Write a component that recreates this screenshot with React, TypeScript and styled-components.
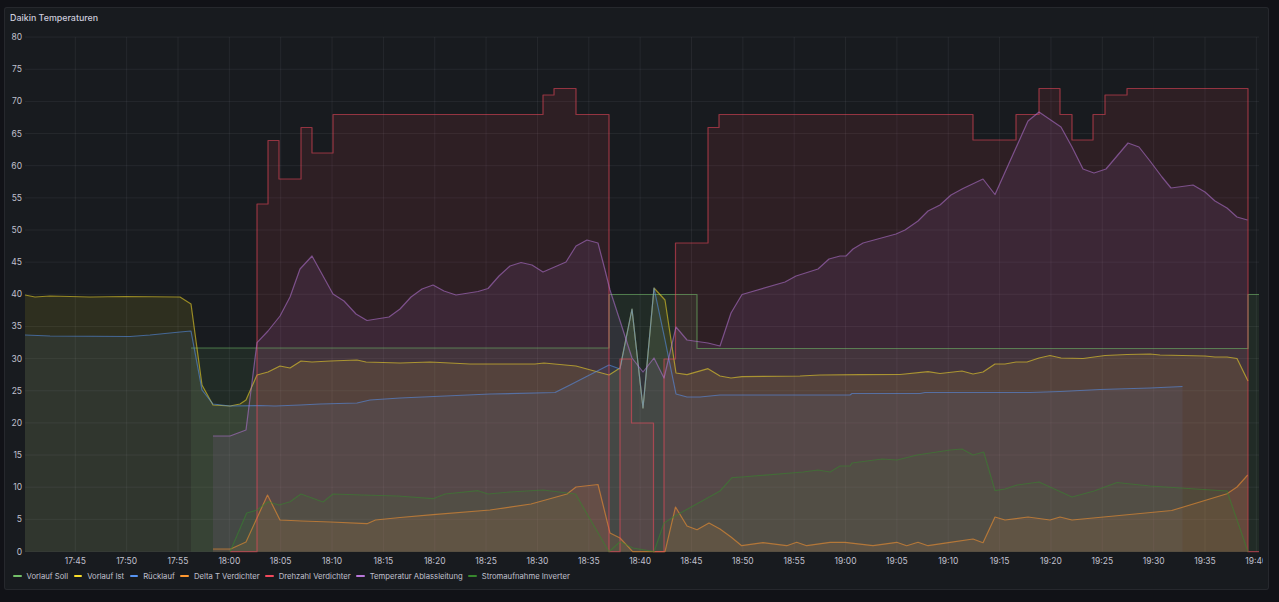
import React from 'react';
import styled, { createGlobalStyle } from 'styled-components';

type Point = [number, number];

// all chart coordinates are page pixels, the svg viewBox starts at the panel's inner corner
const PLOT_LEFT = 25;
const PLOT_RIGHT = 1259;
const BASE_Y = 551.7;
const yOf = (v: number) => 551.5 - v * 6.43;
const xOfMinute = (m: number) => 75.3 + m * 10.27;

const GlobalStyle = createGlobalStyle`
  html, body {
    margin: 0;
    height: 100%;
    background: #111217;
  }
  body {
    font-family: Inter, "Noto Sans", sans-serif;
    color: #ccccdc;
    overflow: hidden;
  }
`;

const Page = styled.div`
  box-sizing: border-box;
  width: 1279px;
  height: 602px;
  padding: 7px 10px 12px 4px;
`;

const Panel = styled.section`
  box-sizing: border-box;
  height: 583px;
  display: flex;
  flex-direction: column;
  background: #181b1f;
  border: 1px solid rgba(204, 204, 220, 0.08);
  border-radius: 3px;
`;

const Title = styled.h2`
  margin: 0;
  height: 20px;
  padding-left: 5px;
  font-size: 8.9px;
  line-height: 19px;
  font-weight: 500;
  color: #ccccdc;
`;

const Chart = styled.svg`
  display: block;
  flex: none;
`;

const GridLine = styled.line`
  stroke: rgba(204, 204, 220, 0.075);
  stroke-width: 1;
`;

const AxisLabel = styled.text`
  font-family: Inter, "Noto Sans", sans-serif;
  font-size: 8.5px;
  fill: #c0c0ce;
`;

const Fill = styled.path<{ $color: string; $opacity: number }>`
  fill: ${(p) => p.$color};
  fill-opacity: ${(p) => p.$opacity};
  stroke: none;
`;

const Line = styled.path<{ $color: string }>`
  fill: none;
  stroke: ${(p) => p.$color};
  stroke-width: 1.2;
  stroke-opacity: 0.55;
  stroke-linejoin: round;
`;

const Legend = styled.ul`
  box-sizing: border-box;
  display: flex;
  align-items: center;
  gap: 5.6px;
  margin: 0;
  padding: 0 0 4px 8px;
  height: 20px;
  list-style: none;
`;

const LegendItem = styled.li`
  display: flex;
  align-items: center;
  gap: 5px;
  font-size: 7.7px;
  color: #c0c0ce;
  white-space: nowrap;
`;

const LegendMark = styled.i<{ $color: string }>`
  display: block;
  width: 8.5px;
  height: 2px;
  border-radius: 1px;
  background: ${(p) => p.$color};
`;

// turns [x, y] holds into a stepped polyline
const step = (points: Point[], endX: number): Point[] => {
  const out: Point[] = [];
  points.forEach(([x, y], i) => {
    const next = i < points.length - 1 ? points[i + 1][0] : endX;
    out.push([x, y], [next, y]);
  });
  return out;
};

const series: { name: string; color: string; fill?: number; points: Point[] }[] = [
  {
    name: 'Vorlauf Soll',
    color: '#73bf69',
    points: step(
      [
        [191, 348],
        [609, 294.5],
        [697, 348.5],
        [1248, 294.5],
      ],
      PLOT_RIGHT,
    ),
  },
  {
    name: 'Vorlauf Ist',
    color: '#fade2a',
    points: [
      [25, 295], [35, 297], [50, 296], [90, 297], [125, 296.5], [180, 297], [191, 304],
      [202, 385], [213, 405], [230, 406], [240, 404], [246, 400], [257, 375], [268, 372],
      [280, 366], [290, 368], [301, 361], [312, 362], [330, 361], [357, 360], [366, 362],
      [400, 363], [430, 362], [470, 364], [510, 364], [535, 364], [544, 363], [576, 366],
      [598, 372], [609, 375], [620, 368], [632, 309], [643, 408], [654, 288], [665, 300],
      [676, 373], [687, 374.7], [708, 368.7], [720, 376], [731, 378], [742, 376.7], [800, 376],
      [820, 375], [860, 374.7], [900, 374.5], [928, 371.7], [940, 373.5], [962, 371], [973, 374],
      [983, 372], [995, 364], [1005, 364], [1016, 362], [1027, 362], [1039, 358], [1050, 355.5],
      [1061, 358], [1083, 358.5], [1105, 355.5], [1127, 354.5], [1150, 354], [1160, 355],
      [1205, 356], [1215, 357], [1227, 357], [1237, 358.5], [1248, 381],
    ],
  },
  {
    name: 'Rücklauf',
    color: '#5794f2',
    fill: 0.075,
    points: [
      [25, 335], [50, 336], [130, 336.5], [150, 335], [180, 332], [191, 331], [202, 390],
      [213, 404], [230, 406], [260, 405.5], [275, 406], [300, 405], [320, 404], [357, 403],
      [370, 400], [400, 398], [490, 394], [555, 392.5], [570, 385], [609, 365], [620, 369],
      [632, 309], [643, 408], [654, 288], [665, 340], [676, 394], [687, 397], [700, 397],
      [720, 395], [850, 395], [852, 393.5], [920, 393.5], [925, 392.5], [1030, 392.5],
      [1060, 391.5], [1100, 389.5], [1150, 388], [1182.5, 386.5],
    ],
  },
  {
    name: 'Delta T Verdichter',
    color: '#ff9830',
    points: [
      [213, 549], [230.6, 549], [246, 542], [267.5, 495], [280, 520], [302, 521], [331, 522],
      [367, 523.7], [375.5, 520], [400, 517.5], [433, 514.7], [490, 510], [531, 504], [567, 494],
      [576, 487], [598, 484.5], [610, 533], [620, 538], [632.7, 551.7], [665, 551.7], [675.5, 507],
      [687, 526], [697, 529.7], [709, 523], [720, 529], [731, 537], [741.7, 545.7], [763, 542.7],
      [786.7, 545.7], [796.7, 542.3], [806.7, 545.7], [830, 542.3], [845, 542.3], [873, 545.7],
      [896.7, 542.3], [906.7, 545.7], [918, 542.3], [928, 545.7], [950, 542.3], [973, 539],
      [983, 542.7], [995, 517], [1005, 520], [1028, 517], [1050, 520], [1060, 517], [1072, 520],
      [1171.7, 510.5], [1227, 493.7], [1237, 487], [1247.7, 475],
    ],
  },
  {
    name: 'Drehzahl Verdichter',
    color: '#f2495c',
    points: step(
      [
        [230, BASE_Y], [257, 204], [268, 140.5], [279, 179], [301, 127.5], [312, 153], [333, 114.5],
        [543, 95], [554, 88.5], [576, 114.5], [609, BASE_Y], [620, 359], [631.5, 423], [653.5, BASE_Y],
        [664, 359], [675.5, 243], [708, 127.5], [719, 114.5], [973, 140], [1016, 114.5], [1039, 88.5],
        [1060, 114.5], [1072, 140], [1093, 114.5], [1105, 95], [1127, 88.5], [1248, BASE_Y],
      ],
      PLOT_RIGHT,
    ),
  },
  {
    name: 'Temperatur Ablassleitung',
    color: '#b877d9',
    points: [
      [213, 436], [230, 436], [246, 430], [257, 342.7], [268, 331], [280, 316], [290, 297], [300, 269],
      [312, 256], [333, 294], [344, 301], [356, 314], [367, 320.5], [389, 317], [400, 309], [411, 297],
      [422, 289], [433, 285], [444, 291], [456, 295], [478, 291.5], [488, 288.5], [499, 276], [510, 266],
      [521, 262.5], [532, 265], [543, 272], [566, 262], [576, 246], [587, 240], [598, 243], [605, 270],
      [610, 290], [623, 330], [632, 358], [643, 372], [654, 358], [664, 378], [676, 327], [687, 340],
      [708, 343], [720, 346], [731, 313], [742, 294.5], [785, 282], [796, 276], [818, 269], [829, 259],
      [840, 256], [846, 256], [853, 249], [863, 243], [896, 234], [905, 230], [918, 221], [928, 211],
      [940, 205], [951, 195], [963, 188.5], [983, 179], [995, 194.5], [1028, 121], [1039, 112], [1061, 127],
      [1072, 147], [1083, 169], [1094, 173], [1106, 169], [1128, 143], [1139, 147], [1150, 161], [1162, 177],
      [1171, 188], [1193, 185], [1205, 192], [1215, 201], [1227, 208], [1237, 217], [1247.5, 220],
    ],
  },
  {
    name: 'Stromaufnahme Inverter',
    color: '#37872d',
    points: [
      [230, 551.7], [246.7, 513], [257, 510], [268, 501.7], [279, 505], [290, 501.7], [301, 494], [312, 498],
      [323, 502], [333, 494], [363, 495], [398, 496], [433, 498.7], [445, 494], [478, 490.7], [488, 494],
      [510, 492], [543, 490], [575.5, 494], [609, 551.7], [620, 541.7], [633, 548], [654, 551.7], [664, 523],
      [675, 516], [720, 491], [732, 477.7], [742, 477], [803, 472], [818, 470], [830, 472], [840, 466],
      [850, 466], [852, 463], [882, 459], [897, 460], [917, 455], [950, 450], [962, 449], [973, 455],
      [983.7, 452], [995, 490.7], [1005, 489], [1017, 485], [1039, 482], [1072, 497], [1094, 491],
      [1117, 482.5], [1150, 486], [1227, 491], [1248, 551.7],
    ],
  },
];

const toLine = (pts: Point[]) =>
  pts.map(([x, y], i) => `${i ? 'L' : 'M'}${x} ${y}`).join('');

const toArea = (pts: Point[]) =>
  `${toLine(pts)}L${pts[pts.length - 1][0]} ${BASE_Y}L${pts[0][0]} ${BASE_Y}Z`;

const yTicks = Array.from({ length: 17 }, (_, i) => i * 5);

const timeTicks = Array.from({ length: 24 }, (_, i) => {
  const total = 17 * 60 + 45 + i * 5;
  const mm = String(total % 60).padStart(2, '0');
  return { x: xOfMinute(i * 5), label: `${Math.floor(total / 60)}:${mm}` };
});

export default function App() {
  return (
    <Page>
      <GlobalStyle />
      <Panel>
        <Title>Daikin Temperaturen</Title>
        <Chart width={1258} height={540} viewBox="5 28 1258 540">
          {yTicks.map((v) => (
            <GridLine key={v} x1={PLOT_LEFT} x2={PLOT_RIGHT} y1={yOf(v)} y2={yOf(v)} />
          ))}
          {timeTicks.map((t) => (
            <GridLine key={t.label} x1={t.x} x2={t.x} y1={yOf(80)} y2={BASE_Y} />
          ))}
          {series.map((s) => (
            <Fill key={s.name} $color={s.color} $opacity={s.fill ?? 0.1} d={toArea(s.points)} />
          ))}
          {series.map((s) => (
            <Line key={s.name} $color={s.color} d={toLine(s.points)} />
          ))}
          {yTicks.map((v) => (
            <AxisLabel key={v} x={22} y={yOf(v) + 3} textAnchor="end">
              {v}
            </AxisLabel>
          ))}
          {timeTicks.map((t) => (
            <AxisLabel key={t.label} x={t.x} y={564} textAnchor="middle">
              {t.label}
            </AxisLabel>
          ))}
        </Chart>
        <Legend>
          {series.map((s) => (
            <LegendItem key={s.name}>
              <LegendMark $color={s.color} />
              {s.name}
            </LegendItem>
          ))}
        </Legend>
      </Panel>
    </Page>
  );
}
